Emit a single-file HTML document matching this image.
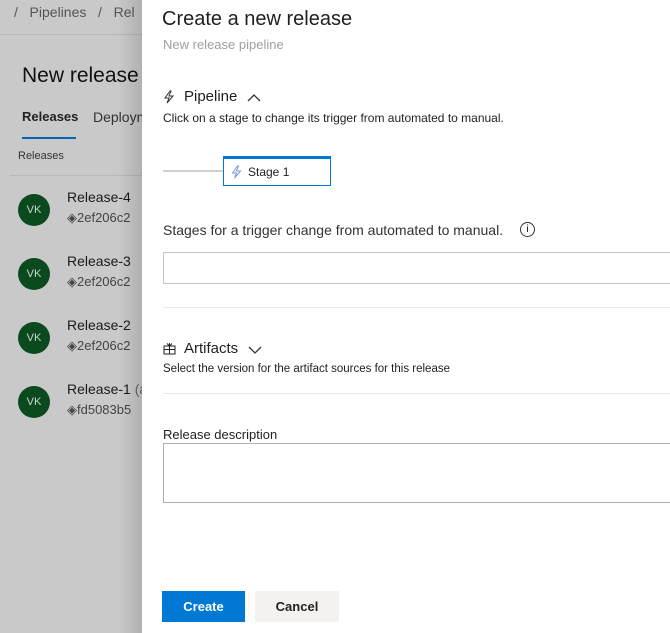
<!DOCTYPE html>
<html><head><style>
*{margin:0;padding:0;box-sizing:border-box}
body{width:670px;height:633px;overflow:hidden;font-family:"Liberation Sans",sans-serif;background:#fff;position:relative}
.left{position:absolute;left:0;top:0;width:142px;height:633px;background:#c9c9c9;overflow:hidden;color:#1a1a1a}
.shadow{position:absolute;left:118px;top:0;width:24px;height:633px;background:linear-gradient(to right,rgba(0,0,0,0),rgba(0,0,0,0.12))}
.a{position:absolute;white-space:nowrap}
.av{position:absolute;left:18px;width:32px;height:32px;border-radius:50%;background:#0b4a1f;color:#c9d6cc;font-size:11px;text-align:center;line-height:32px}
.p{position:absolute;left:142px;top:0;width:528px;height:633px;background:#fff}
.t{position:absolute;white-space:nowrap;color:#201f1e}
</style></head><body>
<div class="left">
<div class="a" style="left:14px;top:4px;font-size:14px;color:#555">/ &nbsp;&nbsp;Pipelines &nbsp;&nbsp;/ &nbsp;&nbsp;Rel</div>
<div style="position:absolute;left:0;top:34px;width:142px;height:1px;background:#b8b8b8"></div>
<div class="a" style="left:22px;top:64px;font-size:21px;color:#111">New release p</div>
<div class="a" style="left:22px;top:109px;font-size:13px;font-weight:bold;color:#222">Releases</div>
<div class="a" style="left:93px;top:109px;font-size:14px;color:#333">Deploym</div>
<div style="position:absolute;left:22px;top:137px;width:54px;height:2px;background:#0066b4"></div>
<div class="a" style="left:18px;top:150px;font-size:11px;color:#333">Releases</div>
<div style="position:absolute;left:10px;top:175px;width:132px;height:1px;background:#b8b8b8"></div>
<div class="av" style="top:194px">VK</div><div class="a" style="left:67px;top:189px;font-size:14px">Release-4</div><div class="a" style="left:67px;top:210px;font-size:13px;color:#444">◈2ef206c2</div>
<div class="av" style="top:258px">VK</div><div class="a" style="left:67px;top:253px;font-size:14px">Release-3</div><div class="a" style="left:67px;top:274px;font-size:13px;color:#444">◈2ef206c2</div>
<div class="av" style="top:322px">VK</div><div class="a" style="left:67px;top:317px;font-size:14px">Release-2</div><div class="a" style="left:67px;top:338px;font-size:13px;color:#444">◈2ef206c2</div>
<div class="av" style="top:386px">VK</div><div class="a" style="left:67px;top:381px;font-size:14px">Release-1 <span style="color:#666">(a</span></div><div class="a" style="left:67px;top:402px;font-size:13px;color:#444">◈fd5083b5</div>
<div class="shadow"></div>
</div>
<div class="p">
<div class="t" style="left:20px;top:8px;font-size:20px">Create a new release</div>
<div class="t" style="left:21px;top:37px;font-size:13px;color:#a19f9d">New release pipeline</div>
<svg style="position:absolute;left:21px;top:90px" width="12" height="14" viewBox="0 0 12 14"><path d="M7 1L2 8h4l-2 5 6-7H6l2-5z" fill="none" stroke="#333" stroke-width="1"/></svg>
<div class="t" style="left:42px;top:88px;font-size:15px">Pipeline</div>
<svg style="position:absolute;left:105px;top:93px" width="14" height="9" viewBox="0 0 14 9"><path d="M1 8L7 2l6 6" fill="none" stroke="#333" stroke-width="1.3"/></svg>
<div class="t" style="left:21px;top:111px;font-size:12px">Click on a stage to change its trigger from automated to manual.</div>
<div style="position:absolute;left:21px;top:170px;width:60px;height:2px;background:#d0d0d0"></div>
<div style="position:absolute;left:81px;top:156px;width:108px;height:30px;border:1px solid #0078d4;border-top:3px solid #0078d4"></div>
<svg style="position:absolute;left:88px;top:165px" width="13" height="14" viewBox="0 0 12 14"><path d="M7 1L2 8h4l-2 5 6-7H6l2-5z" fill="none" stroke="#7a9ad8" stroke-width="1"/></svg>
<div class="t" style="left:106px;top:165px;font-size:12px">Stage 1</div>
<div class="t" style="left:21px;top:222px;font-size:14px;color:#333">Stages for a trigger change from automated to manual.</div>
<div style="position:absolute;left:378px;top:222px;width:15px;height:15px;border:1px solid #333;border-radius:50%;font-size:10px;text-align:center;line-height:13px">i</div>
<div style="position:absolute;left:21px;top:252px;width:520px;height:32px;border:1px solid #c8c6c4"></div>
<div style="position:absolute;left:21px;top:307px;width:520px;height:1px;background:#e8e8e8"></div>
<svg style="position:absolute;left:21px;top:342px" width="13" height="13" viewBox="0 0 13 13"><path d="M1 4h11v8H1zM6.5 1v11M1 7.5h11M4 1.5l2.5 2.5 2.5-2.5" fill="none" stroke="#222" stroke-width="1"/></svg>
<div class="t" style="left:42px;top:340px;font-size:15px">Artifacts</div>
<svg style="position:absolute;left:106px;top:346px" width="14" height="9" viewBox="0 0 14 9"><path d="M1 1l6 6 6-6" fill="none" stroke="#333" stroke-width="1.3"/></svg>
<div class="t" style="left:21px;top:363px;font-size:11.5px">Select the version for the artifact sources for this release</div>
<div style="position:absolute;left:21px;top:393px;width:520px;height:1px;background:#e8e8e8"></div>
<div class="t" style="left:21px;top:427px;font-size:13px">Release description</div>
<div style="position:absolute;left:21px;top:443px;width:520px;height:60px;border:1px solid #b0aeac"></div>
<div style="position:absolute;left:20px;top:591px;width:83px;height:31px;background:#0078d4;color:#fff;font-size:13px;font-weight:bold;text-align:center;line-height:31px">Create</div>
<div style="position:absolute;left:113px;top:591px;width:84px;height:31px;background:#f3f2f1;color:#201f1e;font-size:13px;font-weight:bold;text-align:center;line-height:31px">Cancel</div>
</div>
</body></html>
